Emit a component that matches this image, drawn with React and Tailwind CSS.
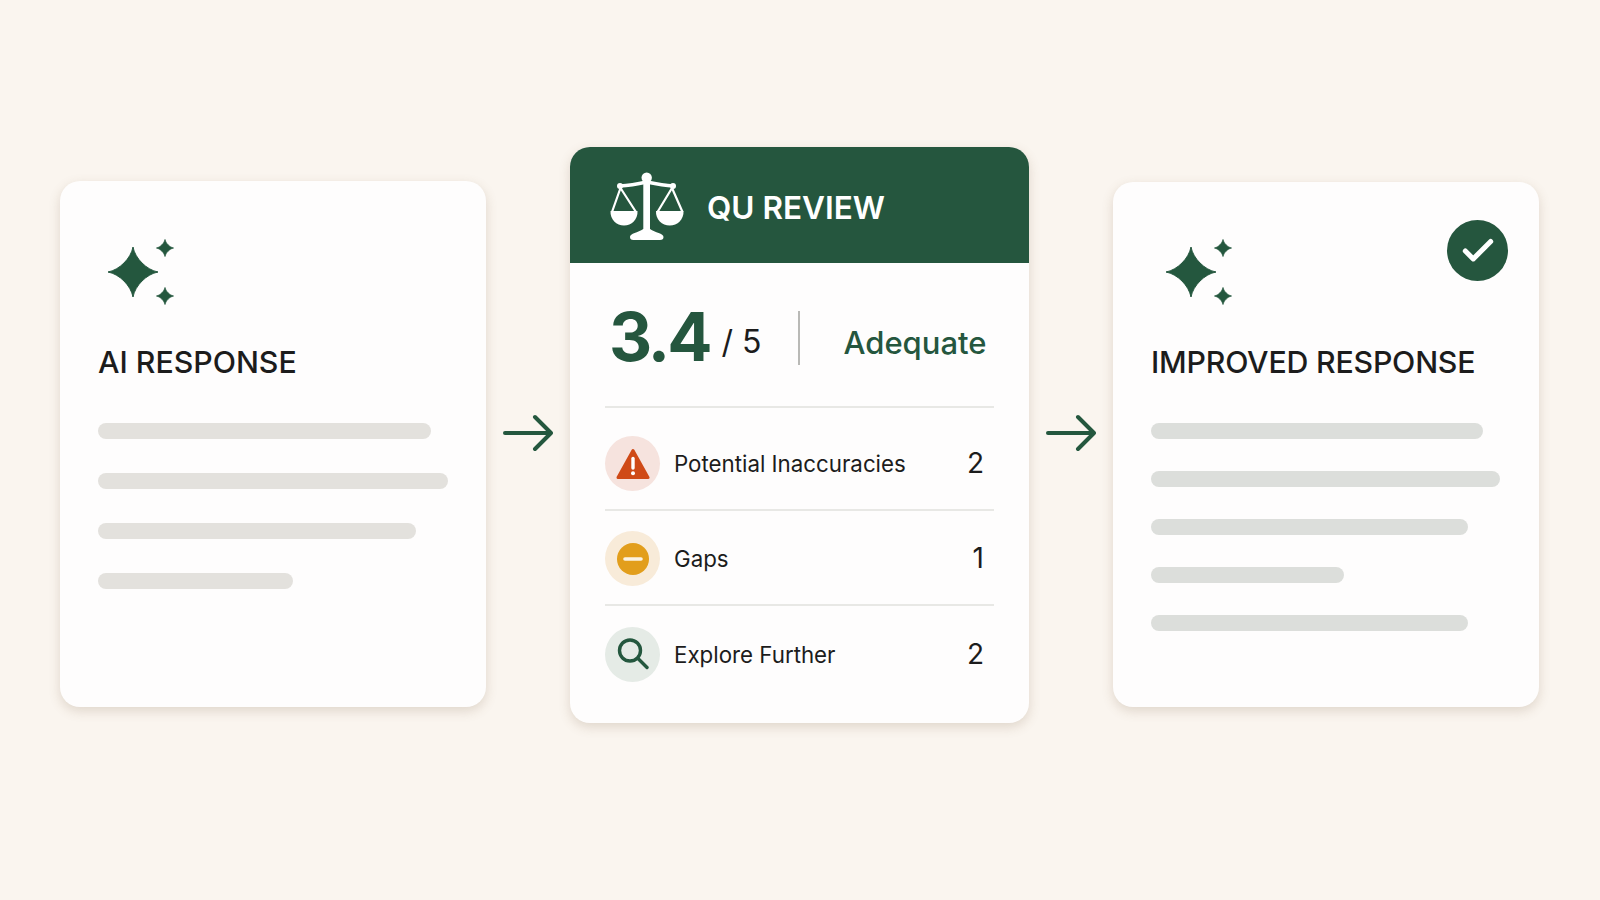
import React from 'react';
import { Check } from 'lucide-react';

const GREEN = '#24573e';

const Sparkles = () => (
  <svg width="76" height="70" viewBox="0 0 76 70" className="block" fill={GREEN}>
    {/* big star centred at 26,36, small ones at 58,12 and 58,60 */}
    <path d="M26 11 C28 22.3 39.7 34 51 36 C39.7 38 28 49.7 26 61 C24 49.7 12.3 38 1 36 C12.3 34 24 22.3 26 11 Z" stroke={GREEN} strokeWidth="1" strokeLinejoin="round" />
    <path d="M58 3.5 C58.7 7.2 62.8 11.3 66.5 12 C62.8 12.7 58.7 16.8 58 20.5 C57.3 16.8 53.2 12.7 49.5 12 C53.2 11.3 57.3 7.2 58 3.5 Z" stroke={GREEN} strokeWidth="0.8" strokeLinejoin="round" />
    <path d="M58 51.5 C58.7 55.2 62.8 59.3 66.5 60 C62.8 60.7 58.7 64.8 58 68.5 C57.3 64.8 53.2 60.7 49.5 60 C53.2 59.3 57.3 55.2 58 51.5 Z" stroke={GREEN} strokeWidth="0.8" strokeLinejoin="round" />
  </svg>
);

const Arrow = () => (
  <svg width="50" height="38" viewBox="0 0 50 38" fill="none" stroke={GREEN} strokeWidth="4" strokeLinecap="round" strokeLinejoin="round" className="block">
    <path d="M2 19 H47" />
    <path d="M32 3 L48 19 L32 35" />
  </svg>
);

const Scales = () => (
  <svg width="74" height="68" viewBox="10 12 74 68" className="block">
    <circle cx="46.7" cy="17.7" r="5.2" fill="#fff" />
    <path d="M20 26 C30 25.5 40 23.5 46.7 22 C54 23.5 64 25.5 73 26" fill="none" stroke="#fff" strokeWidth="3.4" strokeLinecap="round" />
    <circle cx="20" cy="26" r="3" fill="#fff" />
    <circle cx="73" cy="26" r="3" fill="#fff" />
    <path d="M43.3 22 H50 V72 H43.3 Z" fill="#fff" />
    <path d="M30 77 C30 73.5 38 72.5 43.3 69 H50 C55 72.5 63.5 73.5 63.5 77 C63.5 79 62.5 80 60 80 H33.5 C31 80 30 79 30 77 Z" fill="#fff" />
    <path d="M20.5 28 L12 52 M20.5 28 L36 52 M72 28 L57.5 52 M72 28 L82.5 52" fill="none" stroke="#fff" strokeWidth="2.2" />
    <path d="M10.5 51 H37.5 C38 59.5 31.5 65.5 24 65.5 C16.5 65.5 10 59.5 10.5 51 Z" fill="#fff" />
    <path d="M56 51 H83.5 C84 59.5 77.5 65.5 69.7 65.5 C62 65.5 55.5 59.5 56 51 Z" fill="#fff" />
  </svg>
);

const WarnIcon = () => (
  <svg width="34" height="32" viewBox="0 0 34 32" className="block">
    <path d="M17 2.5 L32 29.5 H2 Z" fill="#cf4a17" stroke="#cf4a17" strokeWidth="3" strokeLinejoin="round" />
    <path d="M17 10.5 V20" stroke="#fff" strokeWidth="3.4" strokeLinecap="round" />
    <circle cx="17" cy="25.2" r="2" fill="#fff" />
  </svg>
);

const GapIcon = () => (
  <svg width="32" height="32" viewBox="0 0 32 32" className="block">
    <circle cx="16" cy="16" r="16" fill="#e29e1c" />
    <path d="M8 16 H24" stroke="#fbf3e4" strokeWidth="3.6" strokeLinecap="round" />
  </svg>
);

const SearchIcon = () => (
  <svg width="32" height="32" viewBox="0 0 32 32" fill="none" stroke={GREEN} strokeWidth="3.4" strokeLinecap="round" className="block">
    <circle cx="13" cy="12.5" r="10.5" />
    <path d="M21 20.5 L30 29.5" />
  </svg>
);

const rows = [
  { label: 'Potential Inaccuracies', count: 2, circle: 'bg-[#f6e3de]', Icon: WarnIcon, row: 'h-[101px] pt-[10px]' },
  { label: 'Gaps', count: 1, circle: 'bg-[#f8ebd9]', Icon: GapIcon, row: 'h-[95px] pt-[2px] border-t-2 border-[#e8e8e5]' },
  { label: 'Explore Further', count: 2, circle: 'bg-[#e5ebe6]', Icon: SearchIcon, row: 'h-[98px] border-t-2 border-[#e8e8e5]' },
];

const Bar = ({ width, tone }) => <div className={`h-4 rounded-full ${width} ${tone}`} />;

const App = () => {
  return (
    <div className="w-[1600px] h-[900px] overflow-hidden bg-[#faf5ef] flex items-start pt-[147px] pl-[60px] font-['Inter',sans-serif] text-[#1c1c1c]">
      {/* AI response */}
      <div className="w-[426px] h-[526px] mt-[34px] rounded-[20px] bg-[#fefdfd] shadow-[0_4px_12px_rgba(120,90,60,0.2)] pl-[38px] pt-[55px]">
        <div className="ml-[9px]">
          <Sparkles />
        </div>
        <h2 className="mt-[38px] text-[30.3px] leading-[36px] font-medium">AI RESPONSE</h2>
        <div className="mt-[43px] flex flex-col gap-[34px]">
          <Bar width="w-[333px]" tone="bg-[#e3e1dd]" />
          <Bar width="w-[350px]" tone="bg-[#e3e1dd]" />
          <Bar width="w-[318px]" tone="bg-[#e3e1dd]" />
          <Bar width="w-[195px]" tone="bg-[#e3e1dd]" />
        </div>
      </div>

      <div className="w-[84px] mt-[267px] flex justify-center">
        <Arrow />
      </div>

      {/* QU review */}
      <div className="w-[459px] h-[576px] rounded-[20px] bg-[#fefdfd] shadow-[0_4px_12px_rgba(120,90,60,0.2)] overflow-hidden">
        <div className="h-[116px] bg-[#25563e] flex items-center pl-[40px] pt-[1px] text-white">
          <Scales />
          <span className="ml-[23px] mt-[5px] text-[31.5px] leading-none font-semibold">QU REVIEW</span>
        </div>
        <div className="mx-[35px] h-[145px] pt-[4px] flex items-center border-b-2 border-[#e8e8e5]">
          <span className="ml-[4px] text-[67px] leading-none font-bold tracking-[-3px] text-[#25563e]">3.4</span>
          <span className="ml-[12px] mt-[10px] text-[32px] leading-none whitespace-nowrap">/ 5</span>
          <div className="ml-[36px] mt-[2px] w-[2px] h-[54px] bg-[#b9b9b6]" />
          <span className="ml-[44px] mt-[12px] text-[31px] leading-none font-[450] text-[#25563e]">Adequate</span>
        </div>
        <div className="mx-[35px]">
          {rows.map(({ label, count, circle, Icon, row }) => (
            <div key={label} className={`flex items-center ${row}`}>
              <div className={`w-[55px] h-[55px] rounded-full flex items-center justify-center ${circle}`}>
                <Icon />
              </div>
              <span className="ml-[14px] mt-[2px] text-[22.3px] leading-none">{label}</span>
              <span className="ml-auto mr-[10px] mb-[1px] text-[28px] leading-none">{count}</span>
            </div>
          ))}
        </div>
      </div>

      <div className="w-[84px] mt-[267px] flex justify-center">
        <Arrow />
      </div>

      {/* Improved response */}
      <div className="relative w-[426px] h-[525px] mt-[35px] rounded-[20px] bg-[#fefdfd] shadow-[0_4px_12px_rgba(120,90,60,0.2)] pl-[38px] pt-[54px]">
        <div className="absolute top-[38px] right-[31px] w-[61px] h-[61px] rounded-full bg-[#25563e] flex items-center justify-center">
          <Check size={38} strokeWidth={3.2} color="#fff" />
        </div>
        <div className="ml-[14px]">
          <Sparkles />
        </div>
        <h2 className="mt-[38px] text-[30.3px] leading-[36px] font-medium tracking-[-0.2px]">IMPROVED RESPONSE</h2>
        <div className="mt-[43px] flex flex-col gap-[32px]">
          <Bar width="w-[332px]" tone="bg-[#dcdedb]" />
          <Bar width="w-[349px]" tone="bg-[#dcdedb]" />
          <Bar width="w-[317px]" tone="bg-[#dcdedb]" />
          <Bar width="w-[193px]" tone="bg-[#dcdedb]" />
          <Bar width="w-[317px]" tone="bg-[#dcdedb]" />
        </div>
      </div>
    </div>
  );
};

export default App;
